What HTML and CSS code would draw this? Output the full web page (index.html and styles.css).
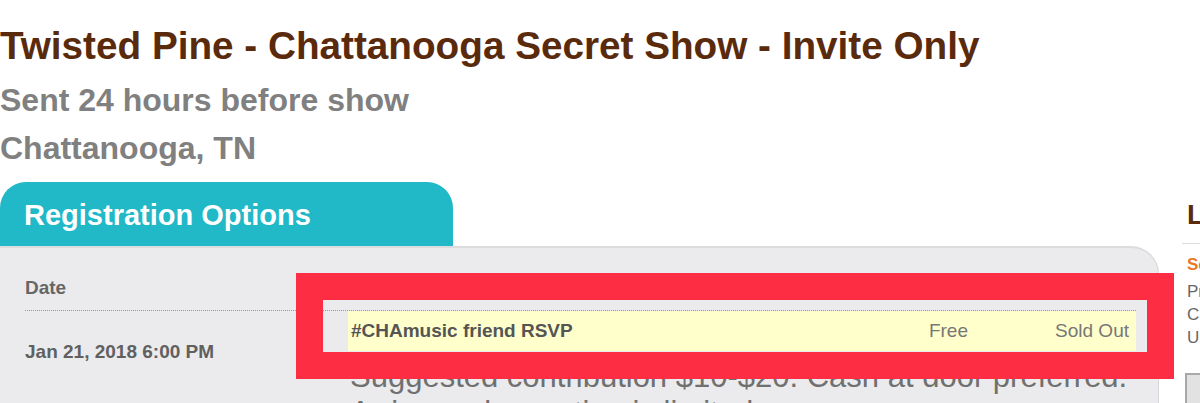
FILE: index.html
```html
<!DOCTYPE html>
<html lang="en">
<head>
<meta charset="utf-8">
<title>Twisted Pine - Chattanooga Secret Show - Invite Only</title>
<link rel="stylesheet" href="styles.css">
</head>
<body>
<div class="page">
  <header class="event-header">
    <h1 class="event-title">Twisted Pine - Chattanooga Secret Show - Invite Only</h1>
    <p class="event-meta first">Sent 24 hours before show</p>
    <p class="event-meta">Chattanooga, TN</p>
  </header>

  <div class="layout">
    <main class="main">
      <div class="tab">Registration Options</div>
      <section class="panel">
        <div class="reg-table">
          <div class="thead">
            <div class="th">Date</div>
            <div class="th"></div>
          </div>
          <div class="tbody">
            <div class="date-cell">Jan 21, 2018 6:00 PM</div>
            <div class="tickets">
              <div class="ticket-row">
                <span class="t-name">#CHAmusic friend RSVP</span>
                <span class="t-price">Free</span>
                <span class="t-status">Sold Out</span>
              </div>
              <p class="t-desc">Suggested contribution $10-$20. Cash at door preferred. Arrive early; seating is limited.</p>
            </div>
          </div>
        </div>
        <div class="annotation"></div>
      </section>
    </main>

    <aside class="sidebar">
      <h2 class="side-title">Location</h2>
      <div class="venue">Secret Venue</div>
      <div class="address">
        <div>Private Residence</div>
        <div>Chattanooga, TN</div>
        <div>United States</div>
      </div>
      <div class="map-btn">Map</div>
    </aside>
  </div>
</div>
</body>
</html>
```

FILE: styles.css
```css
html, body {
  margin: 0;
  padding: 0;
  background: #ffffff;
  overflow: hidden;
}

body {
  font-family: "Liberation Sans", Arial, Helvetica, sans-serif;
}

.page {
  width: 1420px;
}

/* Header */
.event-header {
  padding-top: 22px;
}

.event-title {
  margin: 0;
  font-size: 38.7px;
  line-height: 48px;
  font-weight: bold;
  color: #5a2a0c;
}

.event-meta {
  margin: 0;
  font-size: 32px;
  line-height: 48px;
  font-weight: bold;
  color: #808080;
}

.event-meta.first {
  margin-top: 6px;
}

/* Layout */
.layout {
  display: flex;
  align-items: flex-start;
  margin-top: 10px;
}

.main {
  width: 1159px;
  flex: none;
}

/* Tab */
.tab {
  width: 429px;
  height: 62px;
  padding: 2px 0 0 24px;
  background: #21b8c7;
  border-radius: 26px 26px 0 0;
  color: #ffffff;
  font-size: 29px;
  line-height: 62px;
  font-weight: bold;
}

/* Panel */
.panel {
  position: relative;
  background: #ebebed;
  border-top: 2px solid #dcdcde;
  border-right: 1px solid #d8d8da;
  border-top-right-radius: 28px;
  min-height: 220px;
  padding: 0 22px 0 25px;
}

.thead {
  display: grid;
  grid-template-columns: 323px 1fr;
  padding: 29px 0 11px;
  border-bottom: 1px dotted #9a9a9a;
  font-size: 19px;
  line-height: 22px;
  font-weight: bold;
  color: #666666;
}

.tbody {
  display: grid;
  grid-template-columns: 323px 1fr;
}

.date-cell {
  padding-top: 30px;
  font-size: 19px;
  line-height: 22px;
  font-weight: bold;
  color: #606060;
}

.ticket-row {
  display: grid;
  grid-template-columns: 1fr 100px 161px;
  height: 40px;
  background: #ffffcc;
  font-size: 19px;
  line-height: 40px;
}

.t-name {
  padding-left: 3px;
  font-weight: bold;
  color: #555555;
}

.t-price,
.t-status {
  padding-right: 7px;
  text-align: right;
  color: #777777;
}

.t-desc {
  margin: 0;
  padding-top: 8px;
  padding-left: 2px;
  font-size: 31px;
  line-height: 36px;
  color: #707070;
}

/* Red annotation overlay */
.annotation {
  position: absolute;
  left: 296px;
  top: 25px;
  width: 824px;
  height: 52px;
  border: 27px solid #fd2d44;
}

/* Sidebar */
.sidebar {
  margin-left: 23px;
  width: 220px;
  flex: none;
}

.side-title {
  margin: 0;
  padding: 5px 0 0 5px;
  font-size: 28px;
  line-height: 56px;
  font-weight: bold;
  color: #5a2a0c;
  border-bottom: 1px solid #dddddd;
}

.venue {
  margin-top: 9px;
  padding-left: 5px;
  font-size: 17px;
  line-height: 23px;
  font-weight: bold;
  color: #e8782a;
}

.address {
  margin-top: 4px;
  padding-left: 5px;
  font-size: 17px;
  line-height: 23px;
  color: #666666;
}

.map-btn {
  margin: 24px 0 0 3px;
  width: 116px;
  height: 40px;
  border: 2px solid #a8a8a8;
  background: #e2e2e2;
  color: #555555;
  font-size: 17px;
  line-height: 40px;
  text-align: center;
}
```
